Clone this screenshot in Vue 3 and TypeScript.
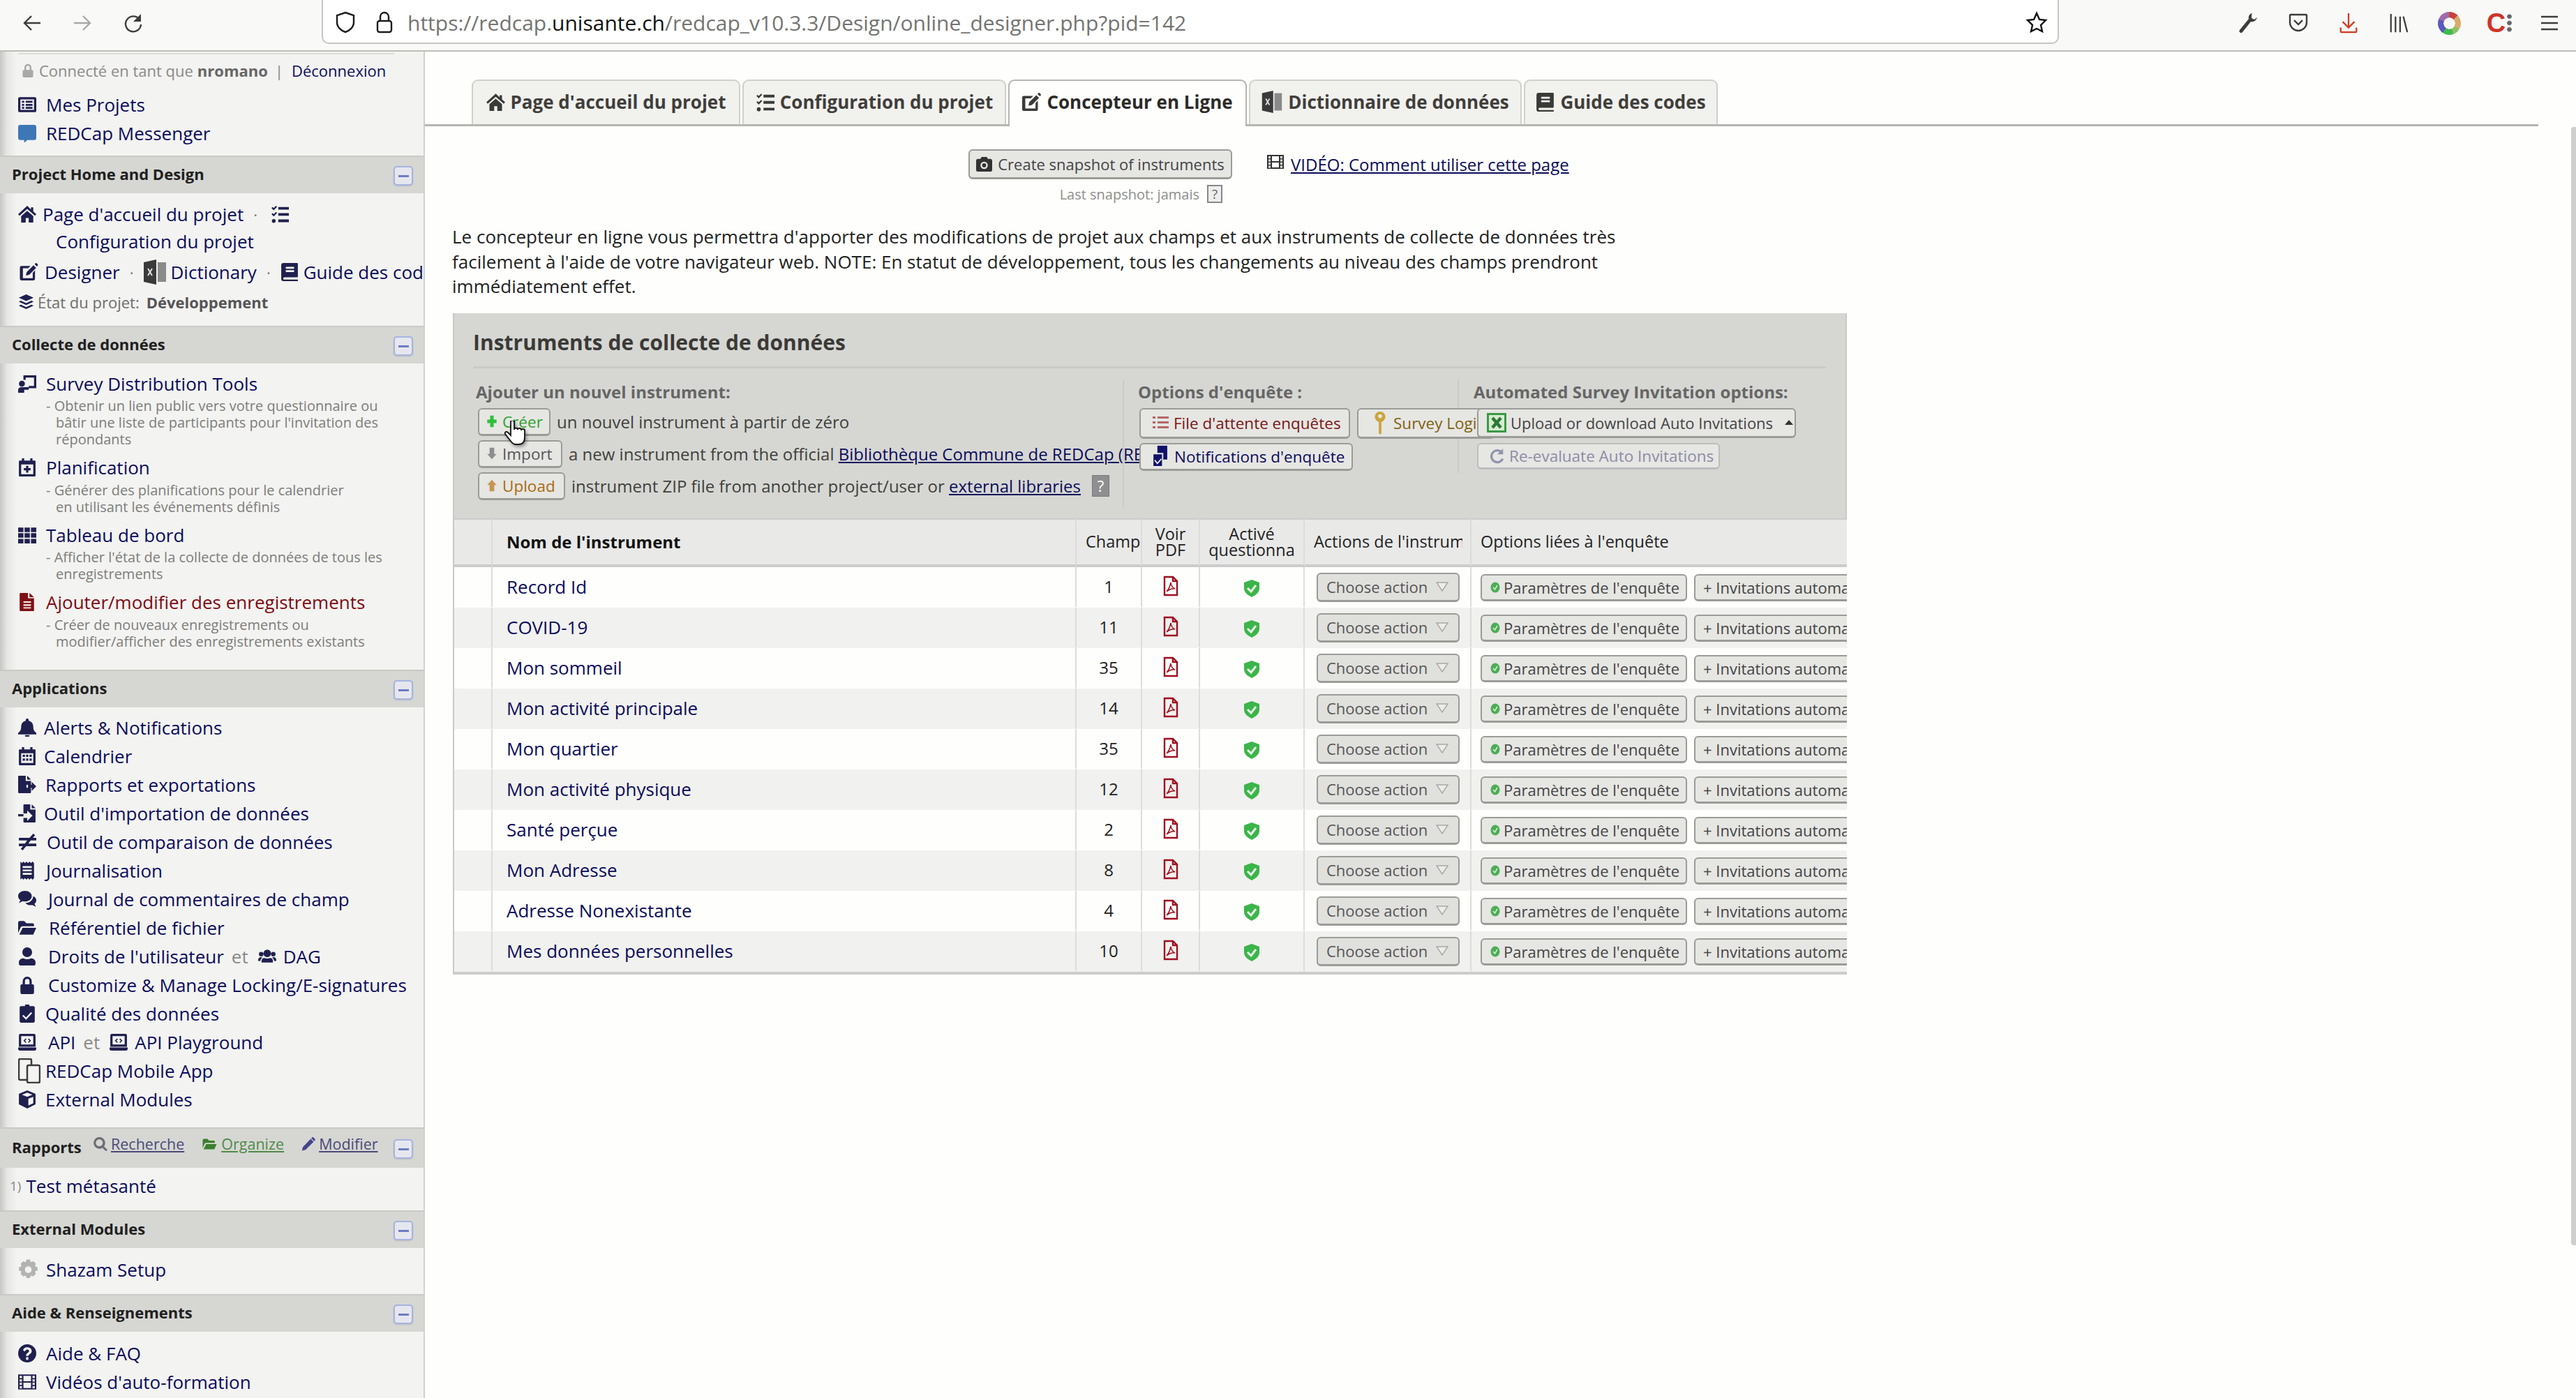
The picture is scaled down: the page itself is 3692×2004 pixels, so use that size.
<template>
  <div class="page">
    <header class="toolbar">
      <button class="tb"><svg viewBox="0 0 28 28"><path d="M26 14H3M13 4L3 14l10 10" /></svg></button>
      <button class="tb dim"><svg viewBox="0 0 28 28"><path d="M2 14h23M15 4l10 10-10 10" /></svg></button>
      <button class="tb"><svg viewBox="0 0 28 28"><path d="M24 9a11 11 0 1 0 2 7" /><path class="solid" d="M26 1v11H15z" /></svg></button>
      <div class="urlbar">
        <svg class="url-ic" viewBox="0 0 30 32"><path d="M15 2l12 4v10c0 7-6 12-12 14C9 28 3 23 3 16V6z" /></svg>
        <svg class="url-ic lock-ic" viewBox="0 0 26 32"><path d="M7 14V8a6 6 0 0 1 12 0v6" /><rect x="3" y="14" width="20" height="16" rx="3" /></svg>
        <span class="url-text">https://redcap.<b>unisante.ch</b>/redcap_v10.3.3/Design/online_designer.php?pid=142</span>
        <svg class="url-star" viewBox="0 0 32 32"><path d="M16 3l4 9 9 1-7 7 2 9-8-4-8 4 2-9-7-7 9-1z" /></svg>
      </div>
      <div class="tb-right">
        <button class="tb"><svg viewBox="0 0 28 30"><path class="solid" d="M20 1c-4 1-6 4-5 8L2 25a2.5 2.5 0 0 0 4 3L18 13c4 1 8-2 9-6l-4 3-4-2 0-4z" /></svg></button>
        <button class="tb"><svg viewBox="0 0 28 28"><path d="M3 2h22a1 1 0 0 1 1 1v10c0 7-6 12-12 12S2 20 2 13V3a1 1 0 0 1 1-1zM8 10l6 6 6-6" /></svg></button>
        <button class="tb red"><svg viewBox="0 0 28 32"><path d="M14 1v22M5 14l9 9 9-9M2 23v6a1 1 0 0 0 1 1h22a1 1 0 0 0 1-1v-6" /></svg></button>
        <button class="tb"><svg viewBox="0 0 28 32"><path d="M2 2v28M9 6v24M16 6v24M21 6l6 24" /></svg></button>
        <button class="tb"><span class="wheel"></span></button>
        <button class="tb"><span class="c-logo">C<i class="c-dots"></i></span></button>
        <button class="tb"><svg viewBox="0 0 28 28"><path d="M2 5h24M2 14h24M2 23h24" /></svg></button>
      </div>
    </header>

    <div class="body">
      <aside class="side">
        <div class="side-top">
          <div class="login"><Ic n="lock" class="login-ic" />Connecté en tant que <b>nromano</b><span class="pipe">|</span><a>Déconnexion</a></div>
          <a class="nav"><span class="gut"><Ic n="listAlt" /></span>Mes Projets</a>
          <a class="nav"><span class="gut"><Ic n="comment" class="blue" /></span>REDCap Messenger</a>
        </div>

        <div class="head"><span class="head-title">Project Home and Design</span><i class="collapse"></i></div>
        <div class="sec sec-home">
          <div class="nav tight"><Ic n="home" /><a class="ml9">Page d'accueil du projet</a><span class="dot">·</span><Ic n="tasks" /></div>
          <div class="nav tight indent">Configuration du projet</div>
          <div class="nav design">
            <Ic n="edit" class="w31" /><a class="ml8">Designer</a><span class="dot">·</span>
            <svg class="xl" viewBox="0 0 32 36"><path d="M0 4l18-4v36L0 32z" /><path d="M20 4h12v28H20z" fill="#8a8a8a" /><path d="M6 13l6 10M12 13L6 23" stroke="#ddd" stroke-width="2" /></svg>
            <a class="ml8">Dictionary</a><span class="dot">·</span><Ic n="book" /><a class="ml7">Guide des codes</a>
          </div>
          <div class="state"><Ic n="layers" class="state-ic" />État du projet: <b>Développement</b></div>
        </div>

        <div class="head"><span class="head-title">Collecte de données</span><i class="collapse"></i></div>
        <div class="sec sec-collect">
          <div v-for="c in collecte" :key="c.label" class="collect-item">
            <a class="nav" :class="{ dark: c.red }"><span class="gut"><Ic :n="c.icon" :class="{ darkred: c.red }" /></span>{{ c.label }}</a>
            <div class="desc"><div v-for="l in c.lines" :key="l">{{ l }}</div></div>
          </div>
        </div>

        <div class="head"><span class="head-title">Applications</span><i class="collapse"></i></div>
        <div class="sec sec-apps">
          <div v-for="a in apps" :key="a.label" class="nav">
            <span class="gut" :style="{ width: a.x + 'px' }">
              <svg v-if="a.icon === 'mobile'" class="mobile" viewBox="0 0 32 36"><rect x="1" y="1" width="18" height="30" rx="2" /><rect x="13" y="10" width="18" height="25" rx="2" fill="#f3f3f1" /></svg>
              <Ic v-else :n="a.icon" />
            </span>
            <a>{{ a.label }}</a>
            <template v-if="a.and"><span class="et">et</span><Ic :n="a.andIcon || ''" class="wide" /><a class="ml7">{{ a.and }}</a></template>
          </div>
        </div>

        <div class="head head-rep">
          <span class="head-title">Rapports</span>
          <span class="rep-links">
            <Ic n="search" class="rep-ic gray" /><a class="rep">Recherche</a>
            <Ic n="folder" class="rep-ic green" /><a class="rep green-t">Organize</a>
            <Ic n="pencil" class="rep-ic navy-l" /><a class="rep">Modifier</a>
          </span>
          <i class="collapse"></i>
        </div>
        <div class="sec sec-rep"><div class="nav rep-row"><span class="num">1)</span><a>Test métasanté</a></div></div>

        <div class="head"><span class="head-title">External Modules</span><i class="collapse"></i></div>
        <div class="sec sec-ext">
          <a class="nav"><span class="gut"><Ic n="gear" class="light" /></span>Shazam Setup</a>
        </div>

        <div class="head"><span class="head-title">Aide &amp; Renseignements</span><i class="collapse"></i></div>
        <div class="sec sec-ext">
          <a class="nav"><span class="gut"><Ic n="help" /></span>Aide &amp; FAQ</a>
          <a class="nav"><span class="gut"><Ic n="film" /></span>Vidéos d'auto-formation</a>
        </div>
      </aside>

      <main class="main">
        <nav class="tabs">
          <a v-for="t in tabs" :key="t.label" class="tab" :class="{ on: t.on }" :style="{ width: t.w + 'px' }">
            <svg v-if="t.icon === 'xl'" class="xl tab-xl" viewBox="0 0 32 36"><path d="M0 4l18-4v36L0 32z" /><path d="M20 4h12v28H20z" fill="#8a8a8a" /><path d="M6 13l6 10M12 13L6 23" stroke="#ddd" stroke-width="2" /></svg>
            <Ic v-else :n="t.icon" />{{ t.label }}
          </a>
        </nav>

        <div class="snap-row">
          <div class="snap">
            <button class="btn snap-btn"><Ic n="camera" />Create snapshot of instruments</button>
            <div class="snap-last">Last snapshot: jamais<span class="q-box">?</span></div>
          </div>
          <a class="video"><Ic n="film" />VIDÉO: Comment utiliser cette page</a>
        </div>

        <p class="intro">Le concepteur en ligne vous permettra d'apporter des modifications de projet aux champs et aux instruments de collecte de données très facilement à l'aide de votre navigateur web. NOTE: En statut de développement, tous les changements au niveau des champs prendront immédiatement effet.</p>

        <section class="panel">
          <div class="panel-title">Instruments de collecte de données</div>
          <div class="cols">
            <div class="col col1">
              <div class="col-label">Ajouter un nouvel instrument:</div>
              <div class="add-row">
                <button class="btn add-btn create"><svg viewBox="0 0 16 24"><path d="M5 2h6v7h5v6h-5v7H5v-7H0V9h5z" /></svg>Créer</button>
                <span>un nouvel instrument à partir de zéro</span>
              </div>
              <div class="add-row">
                <button class="btn add-btn import"><svg viewBox="0 0 16 24"><path d="M4 2h8v11h4l-8 9-8-9h4z" /></svg>Import</button>
                <span>a new instrument from the official <a class="lnk">Bibliothèque Commune de REDCap (REDCap Shared Library)</a></span>
              </div>
              <div class="add-row">
                <button class="btn add-btn upload"><svg viewBox="0 0 16 24"><path d="M8 2l8 9h-4v11H4V11H0z" /></svg>Upload</button>
                <span>instrument ZIP file from another project/user or <a class="lnk">external libraries</a></span>
                <span class="help">?</span>
              </div>
            </div>
            <div class="col col2">
              <div class="col-label">Options d'enquête :</div>
              <div class="opt-row">
                <button class="btn opt queue"><Ic n="tasksList" />File d'attente enquêtes</button>
                <button class="btn opt login-b">
                  <svg viewBox="0 0 22 36"><circle cx="11" cy="9" r="8" /><path d="M9 15h4v19l-2 2-2-2z" /><circle cx="11" cy="8" r="3" fill="#e6e6e3" /></svg>
                  Survey Login
                </button>
              </div>
              <button class="btn opt notif">
                <svg viewBox="0 0 26 34"><path d="M8 1h15v21H8z" /><path d="M1 13h15v20H1z" stroke="#e6e6e3" stroke-width="2" /><path d="M4 23l4 5 6-7" stroke="#e6e6e3" stroke-width="2" fill="none" /></svg>
                Notifications d'enquête
              </button>
            </div>
            <div class="col col3">
              <div class="col-label">Automated Survey Invitation options:</div>
              <button class="btn auto">
                <svg viewBox="0 0 28 28"><rect width="28" height="28" fill="#3a9a46" /><rect x="3" y="3" width="22" height="22" fill="#d6edcf" /><path d="M8 7l12 14M20 7L8 21" stroke="#2c7a38" stroke-width="4.5" /></svg>
                Upload or download Auto Invitations<i class="caret"></i>
              </button>
              <button class="btn reeval"><Ic n="redo" />Re-evaluate Auto Invitations</button>
            </div>
          </div>

          <table class="grid">
            <colgroup>
              <col v-for="w in colWidths" :key="w" :style="{ width: w + 'px' }" />
            </colgroup>
            <thead>
              <tr>
                <th></th>
                <th class="th-name">Nom de l'instrument</th>
                <th class="clip">Champ</th>
                <th class="c">Voir<br />PDF</th>
                <th class="c">Activé<br />questionna</th>
                <th class="clip"><span class="th-cut">Actions de l'instrument</span></th>
                <th class="clip">Options liées à l'enquête</th>
              </tr>
            </thead>
            <tbody>
              <tr v-for="r in rows" :key="r.name">
                <td></td>
                <td class="td-name"><a>{{ r.name }}</a></td>
                <td class="c">{{ r.n }}</td>
                <td class="c">
                  <svg class="pdf" viewBox="0 0 24 30"><path d="M3 2h12l6 6v20H3zM15 2v6h6" /><path class="thin" d="M12 10c-1 5-3 10-6 13 3-3 9-5 12-4-3-1-6-5-6-9z" /></svg>
                </td>
                <td class="c">
                  <svg class="shield" viewBox="0 0 24 26"><path d="M12 1l11 4v8c0 6-5 10-11 13C6 23 1 19 1 13V5z" /><path class="chk" d="M6 13l5 5 7-9" /></svg>
                </td>
                <td class="td-act">
                  <button class="btn choose">Choose action<svg class="tri" viewBox="0 0 18 14"><path d="M1 1h16L9 13z" /></svg></button>
                </td>
                <td class="td-opt">
                  <button class="btn param"><svg class="ok" viewBox="0 0 14 16"><ellipse cx="7" cy="8" rx="6.5" ry="7.5" /><path d="M4 8l2.5 3L10 5" /></svg>Paramètres de l'enquête</button>
                  <button class="btn invite">+ Invitations automatiques</button>
                </td>
              </tr>
            </tbody>
          </table>
        </section>

        <svg class="cursor" viewBox="0 0 34 36"><path d="M10 2a2.5 2.5 0 0 1 5 0v11a2.5 2.5 0 0 1 5 0 2.5 2.5 0 0 1 5 1 2.5 2.5 0 0 1 5 1v9c0 6-3 10-9 10h-4c-4 0-6-3-8-6l-7-9c-1-3 2-4 4-2l4 4z" /></svg>
      </main>
      <div class="scroll-thumb"></div>
    </div>
  </div>
</template>

<script setup lang="ts">
import { h } from "vue"
import type { FunctionalComponent } from "vue"

const icons: Record<string, string> = {
  lock: "M6 11V7a6 6 0 0 1 12 0v4h1a2 2 0 0 1 2 2v9a2 2 0 0 1-2 2H5a2 2 0 0 1-2-2v-9a2 2 0 0 1 2-2zM9 11h6V7a3 3 0 0 0-6 0z",
  listAlt: "M2 2h20a2 2 0 0 1 2 2v16a2 2 0 0 1-2 2H2a2 2 0 0 1-2-2V4a2 2 0 0 1 2-2zM3 5v14h18V5zM5 7h3v2.5H5zM10 7h9v2.5h-9zM5 11h3v2.5H5zM10 11h9v2.5h-9zM5 15h3v2.5H5zM10 15h9v2.5h-9z",
  comment: "M3 1h18a3 3 0 0 1 3 3v14a3 3 0 0 1-3 3H12l-4 4v-4H3a3 3 0 0 1-3-3V4a3 3 0 0 1 3-3z",
  home: "M12 1L0 12l1.8 2L12 5l10.2 9 1.8-2-4-3.6V3h-3v2.7zM12 7.5L4 14.5V23h6v-6h4v6h6v-8.5z",
  tasks: "M1 4l1.4-1.4L4 4l3-3 1.4 1.4L4 7zM10 2.5h14V6H10zM1 12l1.4-1.4L4 12l3-3 1.4 1.4L4 15zM10 10.5h14V14H10zM1.5 21a2.5 2.5 0 1 1 5 0 2.5 2.5 0 0 1-5 0zM10 19h14v3.5H10z",
  tasksList: "M1 3h4v3H1zM8 3h16v3H8zM1 10h4v3H1zM8 10h16v3H8zM1 17h4v3H1zM8 17h16v3H8z",
  edit: "M2 4h12l-3 3H4v13h13v-7l3-3v11a2 2 0 0 1-2 2H2a2 2 0 0 1-2-2V6a2 2 0 0 1 2-2zM9 12l9-9 3.5 3.5-9 9-4.5 1zM19.5 1.5l1-1a1.5 1.5 0 0 1 2 0l1 1a1.5 1.5 0 0 1 0 2l-1 1z",
  book: "M4 0h18a1 1 0 0 1 1 1v17a1 1 0 0 1-1 1H5a1.5 1.5 0 0 0 0 3h18v2H4a3 3 0 0 1-3-3V3a3 3 0 0 1 3-3zM7 5v2.5h11V5zM7 9.5V12h11V9.5z",
  layers: "M12 1l11 5-11 5L1 6zM4 10.5l8 3.7 8-3.7 3 1.5-11 5L1 12zM4 16.5l8 3.7 8-3.7 3 1.5-11 5L1 18z",
  chalk: "M7 1h17v17H14v-3h7V4H10v3H7zM5 8a4 4 0 1 1 0 8 4 4 0 0 1 0-8zM0 20c0-2 2-3.5 5-3.5h9V20h-6v4H0z",
  calPlus: "M5 0h3v3h8V0h3v3h3a1 1 0 0 1 1 1v19a1 1 0 0 1-1 1H2a1 1 0 0 1-1-1V4a1 1 0 0 1 1-1h3zM4 8v13h16V8zM10.5 10h3v3h3v3h-3v3h-3v-3h-3v-3h3z",
  th: "M0 2h7v6H0zM8.5 2h7v6h-7zM17 2h7v6h-7zM0 9.5h7v6H0zM8.5 9.5h7v6h-7zM17 9.5h7v6h-7zM0 17h7v6H0zM8.5 17h7v6h-7zM17 17h7v6h-7z",
  fileAlt: "M3 0h10v7h8v16a1 1 0 0 1-1 1H3a1 1 0 0 1-1-1V1a1 1 0 0 1 1-1zM15 0l6 5.5h-6zM7 11v2h10v-2zM7 15v2h10v-2zM7 19v1.5h10V19z",
  bell: "M12 0a2 2 0 0 1 2 2v1c4 1 6 4 6 8 0 5 2 6 4 8v2H0v-2c2-2 4-3 4-8 0-4 2-7 6-8V2a2 2 0 0 1 2-2zM9 22h6a3 3 0 0 1-6 0z",
  calAlt: "M5 0h3v3h8V0h3v3h3a1 1 0 0 1 1 1v19a1 1 0 0 1-1 1H2a1 1 0 0 1-1-1V4a1 1 0 0 1 1-1h3zM4 8v13h16V8zM6 10h3v3H6zM10.5 10h3v3h-3zM15 10h3v3h-3zM6 15h3v3H6zM10.5 15h3v3h-3zM15 15h3v3h-3z",
  fileExport: "M1 0h9v7h7v5h-6v4h6v6a1 1 0 0 1-1 1H1a1 1 0 0 1-1-1V1a1 1 0 0 1 1-1zM12 0l5 5h-5zM13 12h5V8l6 6-6 6v-4h-5z",
  fileImport: "M8 0h8v7h7v16a1 1 0 0 1-1 1H8a1 1 0 0 1-1-1v-5h5v4l7-7-7-7v4H7V1a1 1 0 0 1 1-1zM18 0l5 5h-5zM0 13h7v3H0z",
  notEqual: "M20 1l2.5 2-3 3.5H24V10h-7.5l-3 4H24v3.5H10.5L6 23l-2.5-2 3-3.5H1V14h8l3-4H1V6.5h14z",
  receipt: "M3 0l2 2 2-2 2 2 2-2 2 2 2-2 2 2 2-2 2 2v20l-2 2-2-2-2 2-2-2-2 2-2-2-2 2-2-2-2 2zM6 6v2.5h12V6zM6 10.5V13h12v-2.5zM6 15v2.5h12V15z",
  comments: "M9 1c5 0 9 3 9 7s-4 7-9 7c-1 0-2 0-3-.4L1 17l2-4c-2-1-3-3-3-5 0-4 4-7 9-7zM20 8c2.5 1 4 3 4 5.5 0 2-1 3.5-2.5 4.5l2 4-5-2.5c-3 1-7 0-9-2.5 5.5 0 10-3.5 10.5-9z",
  folder: "M2 3h6l3 3h8a2 2 0 0 1 2 2v2H6c-1.5 0-2.5 1-3 2L0 19V5a2 2 0 0 1 2-2zM6 12h18l-4 9H1.5z",
  user: "M12 0a6.5 6.5 0 1 1 0 13 6.5 6.5 0 0 1 0-13zM7 14.5c3 1.5 7 1.5 10 0 3 0 6 2 6 5V22a2 2 0 0 1-2 2H3a2 2 0 0 1-2-2v-2.5c0-3 3-5 6-5z",
  users: "M12 3a5 5 0 1 1 0 10 5 5 0 0 1 0-10zM4 6a3 3 0 1 1 0 6 3 3 0 0 1 0-6zM20 6a3 3 0 1 1 0 6 3 3 0 0 1 0-6zM8 14c2.5 1 5.5 1 8 0 2 0 3.5 1.5 3.5 4v2H4.5v-2c0-2.5 1.5-4 3.5-4zM0 17c0-2.5 1.5-4 4-4l1.5.5C4 14.5 3 16 3 18H0zM24 17c0-2.5-1.5-4-4-4l-1.5.5c1.5 1 2.5 2.5 2.5 4.5h3z",
  clipboard: "M9 2a3 3 0 0 1 6 0h5a2 2 0 0 1 2 2v18a2 2 0 0 1-2 2H4a2 2 0 0 1-2-2V4a2 2 0 0 1 2-2zM17 10l-6.5 7L7 13.5 5.5 15l5 5 8-8.5z",
  laptop: "M3 1h18a2 2 0 0 1 2 2v15H1V3a2 2 0 0 1 2-2zM4 4v11h16V4zM10 7l-3 3 3 3 1-1-2-2 2-2zM14 7l3 3-3 3-1-1 2-2-2-2zM0 19h24v2a2 2 0 0 1-2 2H2a2 2 0 0 1-2-2z",
  cube: "M12 0l11 4.5v14L12 24 1 18.5v-14zM12 3L5 5.8l7 2.8 7-2.8zM13.5 11v9l6.5-3V8.5z",
  search: "M10 0a10 10 0 0 1 8 16l6 6-2.5 2.5-6-6A10 10 0 1 1 10 0zM10 4a6 6 0 1 0 0 12 6 6 0 0 0 0-12z",
  pencil: "M16 3l5 5L7 22l-6 1.5L2.5 17zM18 1a2 2 0 0 1 3 0l2 2a2 2 0 0 1 0 3l-1 1-5-5z",
  gear: "M10 0h4l1 3 3-1 3 3-1 3 3 1v4l-3 1 1 3-3 3-3-1-1 3h-4l-1-3-3 1-3-3 1-3-3-1v-4l3-1-1-3 3-3 3 1zM12 8a4 4 0 1 0 0 8 4 4 0 0 0 0-8z",
  help: "M12 0a12 12 0 1 1 0 24 12 12 0 0 1 0-24zM12 4c-3 0-5 2-5.5 4l2.5 1.5c.5-1 1.5-2.5 3-2.5 1.3 0 2.5 1 2.5 2 0 2-4 2.5-4 6v.5h3c0-2 4.5-3 4.5-6.5C18 6 15 4 12 4zM10.5 17v3.5h3V17z",
  film: "M0 2h24v20H0zM2 4v3h3V4zM2 8.5v3h3v-3zM2 13v3h3v-3zM2 17.5v3h3v-3zM19 4v3h3V4zM19 8.5v3h3v-3zM19 13v3h3v-3zM19 17.5v3h3v-3zM7 4v7h10V4zM7 13v7h10v-7z",
  camera: "M8 1h8l1.5 3H21a3 3 0 0 1 3 3v13a3 3 0 0 1-3 3H3a3 3 0 0 1-3-3V7a3 3 0 0 1 3-3h3.5zM12 8a5.5 5.5 0 1 0 0 11 5.5 5.5 0 0 0 0-11zM12 10.5a3 3 0 1 1 0 6 3 3 0 0 1 0-6z",
  redo: "M21 1v9h-9l3.5-3.5A7.5 7.5 0 1 0 19 16l3 2A11 11 0 1 1 18 4z",
}

const Ic: FunctionalComponent<{ n: string }> = (p) =>
  h("svg", { viewBox: "0 0 24 24", class: "ic" }, [h("path", { d: icons[p.n], "fill-rule": "evenodd" })])
Ic.props = ["n"]

const collecte = [
  {
    label: "Survey Distribution Tools",
    icon: "chalk",
    lines: ["- Obtenir un lien public vers votre questionnaire ou", "bâtir une liste de participants pour l'invitation des", "répondants"],
  },
  { label: "Planification", icon: "calPlus", lines: ["- Générer des planifications pour le calendrier", "en utilisant les événements définis"] },
  { label: "Tableau de bord", icon: "th", lines: ["- Afficher l'état de la collecte de données de tous les", "enregistrements"] },
  {
    label: "Ajouter/modifier des enregistrements",
    icon: "fileAlt",
    red: true,
    lines: ["- Créer de nouveaux enregistrements ou", "modifier/afficher des enregistrements existants"],
  },
]

const apps: { label: string; icon: string; x: number; and?: string; andIcon?: string }[] = [
  { label: "Alerts & Notifications", icon: "bell", x: 37 },
  { label: "Calendrier", icon: "calAlt", x: 37 },
  { label: "Rapports et exportations", icon: "fileExport", x: 39 },
  { label: "Outil d'importation de données", icon: "fileImport", x: 37 },
  { label: "Outil de comparaison de données", icon: "notEqual", x: 41 },
  { label: "Journalisation", icon: "receipt", x: 40 },
  { label: "Journal de commentaires de champ", icon: "comments", x: 43 },
  { label: "Référentiel de fichier", icon: "folder", x: 44 },
  { label: "Droits de l'utilisateur", icon: "user", x: 43, and: "DAG", andIcon: "users" },
  { label: "Customize & Manage Locking/E-signatures", icon: "lock", x: 43 },
  { label: "Qualité des données", icon: "clipboard", x: 39 },
  { label: "API", icon: "laptop", x: 43, and: "API Playground", andIcon: "laptop" },
  { label: "REDCap Mobile App", icon: "mobile", x: 39 },
  { label: "External Modules", icon: "cube", x: 39 },
]

const tabs = [
  { label: "Page d'accueil du projet", icon: "home", w: 385 },
  { label: "Configuration du projet", icon: "tasks", w: 378 },
  { label: "Concepteur en Ligne", icon: "edit", w: 342, on: true },
  { label: "Dictionnaire de données", icon: "xl", w: 391 },
  { label: "Guide des codes", icon: "book", w: 278 },
]

const colWidths = [55, 837, 94, 83, 150, 239, 538]

const rows = [
  { name: "Record Id", n: 1 },
  { name: "COVID-19", n: 11 },
  { name: "Mon sommeil", n: 35 },
  { name: "Mon activité principale", n: 14 },
  { name: "Mon quartier", n: 35 },
  { name: "Mon activité physique", n: 12 },
  { name: "Santé perçue", n: 2 },
  { name: "Mon Adresse", n: 8 },
  { name: "Adresse Nonexistante", n: 4 },
  { name: "Mes données personnelles", n: 10 },
]
</script>

<style>
html, body { margin: 0; background: #fefefc; }
</style>

<style scoped>
.page {
  width: 3692px;
  height: 2004px;
  overflow: hidden;
  background: #fefefc;
  font-family: "Open Sans", "Liberation Sans", sans-serif;
  font-size: 26px;
  color: #1d1d1b;
}
svg { display: block; flex: none; }
.ic { width: 26px; height: 26px; fill: #20204f; flex: none; }
a { color: #0c0c5c; text-decoration: none; }
button { font-family: inherit; }

/* browser chrome */
.toolbar {
  height: 74px;
  box-sizing: border-box;
  background: #f9f9f7;
  border-bottom: 2px solid #bdbdb8;
  display: flex;
  align-items: center;
  padding-left: 10px;
}
.tb {
  width: 72px;
  height: 64px;
  margin-top: -6px;
  border: none;
  background: none;
  padding: 0;
  display: flex;
  align-items: center;
  justify-content: center;
  flex: none;
}
.tb svg { width: 28px; height: 30px; fill: none; stroke: #3d3d3b; stroke-width: 2.4; }
.tb .solid { fill: #3d3d3b; stroke: none; }
.tb.dim svg { stroke: #a8a8a6; }
.tb.red svg { stroke: #d23a22; }
.wheel {
  width: 33px;
  height: 33px;
  border-radius: 50%;
  background:
    radial-gradient(circle, #f9f9f7 34%, transparent 36%),
    conic-gradient(#c8413f 0 45deg, #d9ab6e 45deg 120deg, #8cc06a 120deg 160deg, #3fbb4b 160deg 215deg, #5b5bbd 215deg 290deg, #a06bac 290deg 360deg);
}
.c-logo {
  font-family: "Liberation Sans", sans-serif;
  font-weight: 700;
  font-size: 38px;
  line-height: 34px;
  color: #cf3327;
  display: flex;
  align-items: center;
  gap: 2px;
}
.c-dots {
  width: 7px;
  height: 28px;
  background: radial-gradient(circle, #666 3px, transparent 3.5px) 0 0 / 7px 9.3px;
}
.urlbar {
  margin-left: 235px;
  margin-top: -9px;
  width: 2490px;
  height: 63px;
  box-sizing: border-box;
  flex: none;
  background: #fff;
  border: 2px solid #c6c6c2;
  border-top: none;
  border-radius: 0 0 10px 10px;
  display: flex;
  align-items: center;
  padding: 3px 14px 0 17px;
}
.url-ic { width: 30px; height: 32px; fill: none; stroke: #1c1c1c; stroke-width: 2.4; }
.lock-ic { width: 26px; margin-left: 28px; }
.url-text { margin-left: 20px; font-size: 30px; color: #747471; white-space: nowrap; flex: 1; }
.url-text b { font-weight: 400; color: #111; }
.url-star { width: 32px; height: 32px; fill: none; stroke: #111; stroke-width: 2.4; }
.tb-right { margin-left: 235px; display: flex; flex: none; }

.body { display: flex; height: 1930px; position: relative; }

/* sidebar */
.side {
  width: 607px;
  flex: none;
  height: 1930px;
  overflow: hidden;
  border-right: 2px solid #cfcfcb;
  background: linear-gradient(90deg, #c6c6c3 0, #e6e6e4 10px, #f3f3f1 24px);
}
.side-top { height: 147px; }
.side-top::before {
  content: "";
  display: block;
  height: 2px;
  margin: 2px 42px 0 26px;
  background: #dcdcd9;
}
.login {
  height: 40px;
  margin-top: 3px;
  padding-left: 30px;
  display: flex;
  align-items: center;
  font-size: 22px;
  color: #8a8a87;
  white-space: nowrap;
}
.login b { margin-left: 6px; color: #666; font-weight: 700; }
.login-ic { width: 20px; height: 22px; fill: #a9a9a6; margin-right: 6px; }
.pipe { margin: 0 12px 0 10px; color: #888; }
.login a { color: #0c0c5c; }
.nav {
  height: 41px;
  box-sizing: border-box;
  display: flex;
  align-items: center;
  padding-left: 26px;
  padding-bottom: 4px;
  white-space: nowrap;
  color: #0c0c5c;
}
.login + .nav { margin-top: 10px; }
.gut { width: 40px; flex: none; display: block; }
.blue { fill: #3e77b6; }
.head {
  height: 54px;
  box-sizing: border-box;
  border-top: 2px solid #c9c9c5;
  background: #d6d7d3;
  display: flex;
  align-items: center;
  padding: 0 15px 5px 17px;
  font-size: 22px;
  font-weight: 700;
  color: #20201e;
}
.head-title { flex: 1; white-space: nowrap; }
.collapse {
  width: 28px;
  height: 28px;
  margin-top: 7px;
  box-sizing: border-box;
  flex: none;
  border: 2px solid #a6b4e2;
  border-radius: 5px;
  background: #e6e7ee;
  display: flex;
  align-items: center;
  justify-content: center;
  box-shadow: 0 1px 2px #bbb;
}
.collapse::after { content: ""; width: 15px; height: 3px; background: #6c7cc4; }
.sec { padding-top: 12px; }
.sec-home { height: 178px; }
.tight { height: 39px; }
.ml9 { margin-left: 9px; }
.ml8 { margin-left: 7px; }
.ml7 { margin-left: 7px; }
.dot { margin: 0 14px; color: #777; font-size: 22px; }
.tight .ic:last-child { width: 28px; margin-left: 4px; }
.indent { padding-left: 80px; }
.design { margin-top: 4px; }
.w31 { width: 31px; }
.xl { width: 32px; height: 36px; fill: #3a3a3a; }
.state {
  height: 40px;
  box-sizing: border-box;
  margin-top: 3px;
  padding-left: 26px;
  padding-bottom: 5px;
  display: flex;
  align-items: center;
  font-size: 22px;
  color: #6e6e6b;
  white-space: nowrap;
}
.state b { margin-left: 10px; color: #555; }
.state-ic { width: 23px; height: 23px; margin-right: 5px; }
.sec-collect { height: 439px; box-sizing: border-box; padding-top: 10px; }
.collect-item { margin-bottom: 9.5px; }
.dark { color: #7e0a12; }
.darkred { fill: #800f14; }
.desc { padding-left: 66px; margin-top: -2px; font-size: 20px; line-height: 24px; color: #7d7d7a; white-space: nowrap; }
.desc div + div { padding-left: 14px; }
.sec-apps { height: 602px; box-sizing: border-box; padding-top: 10px; }
.et { margin: 0 11px; color: #8a8a87; }
.wide { width: 32px; }
.mobile { width: 32px; height: 36px; fill: none; stroke: #3c3c3c; stroke-width: 2.5; }
.head-rep { height: 58px; }
.head-rep .head-title { flex: 0 0 auto; width: 117px; }
.rep-links { flex: 1; display: flex; align-items: center; margin-top: -8px; font-weight: 400; }
.rep { font-size: 21.5px; color: #4a4a78; text-decoration: underline; margin: 0 25px 0 5px; }
.rep:last-child { margin-right: 0; }
.rep-ic { width: 20px; height: 20px; }
.gray { fill: #6d6d75; }
.green { fill: #3c7f2e; width: 23px; }
.green-t { color: #4f8a48; }
.navy-l { fill: #45458c; }
.sec-rep { height: 54px; padding-top: 7px; }
.rep-row { padding-left: 14px; }
.num { font-size: 19px; color: #888; margin-right: 7px; }
.sec-ext { height: 54px; }
.light { fill: #b3b3b1; width: 29px; height: 30px; }

/* main */
.main { flex: 1; min-width: 0; position: relative; }
.tabs {
  margin-top: 40px;
  height: 64px;
  width: 2962px;
  padding-left: 67px;
  border-bottom: 3px solid #b5b5b1;
  display: flex;
  gap: 3px;
}
.tab {
  height: 64px;
  box-sizing: border-box;
  border: 2px solid #d0d0cc;
  border-bottom: none;
  border-radius: 9px 9px 0 0;
  background: #f1f1ee;
  display: flex;
  align-items: center;
  justify-content: center;
  gap: 8px;
  padding-bottom: 2px;
  font-size: 26px;
  font-weight: 700;
  color: #403e3b;
  white-space: nowrap;
}
.tab .ic { fill: #3a3a38; width: 27px; height: 27px; }
.tab-xl { width: 30px; height: 32px; }
.tab.on {
  background: #fefefc;
  color: #2b2a27;
  height: 67px;
  padding-bottom: 5px;
  border-color: #b5b5b1;
}
.snap-row { display: flex; padding-left: 779px; margin-top: 33px; }
.snap { width: 378px; display: flex; flex-direction: column; }
.btn {
  box-sizing: border-box;
  background: #e6e6e3;
  border: 2px solid #9b9b97;
  border-bottom-width: 3px;
  border-radius: 6px;
  color: #444;
  font-size: 22px;
  display: flex;
  align-items: center;
  white-space: nowrap;
  padding: 0;
  position: relative;
  flex: none;
}
.snap-btn { height: 43px; justify-content: center; gap: 8px; }
.snap-btn .ic { width: 23px; height: 23px; fill: #333; }
.snap-last {
  margin-top: 6px;
  height: 30px;
  display: flex;
  align-items: center;
  justify-content: flex-end;
  padding-right: 14px;
  font-size: 20px;
  color: #8e8e8b;
  white-space: nowrap;
}
.q-box {
  width: 22px;
  height: 26px;
  margin-left: 11px;
  box-sizing: border-box;
  border: 2px solid #888;
  background: #eee;
  color: #666;
  font-size: 19px;
  line-height: 22px;
  text-align: center;
}
.video {
  margin-left: 49px;
  height: 43px;
  display: flex;
  align-items: center;
  gap: 9px;
  font-size: 24px;
  text-decoration: underline;
  white-space: nowrap;
  color: #0c0c5c;
}
.video .ic { width: 26px; height: 24px; fill: #333; margin-top: -8px; }
.intro {
  margin: 29px 0 20px 39px;
  width: 1690px;
  line-height: 35.5px;
  color: #222;
}
.panel {
  margin-left: 40px;
  width: 1998px;
  box-sizing: border-box;
  background: #d6d7d3;
  border-left: 2px solid #c9c9c5;
  border-right: 2px solid #c9c9c5;
  border-bottom: 4px solid #ccc;
}
.panel-title {
  margin: 0 28px 0 27px;
  height: 79px;
  box-sizing: border-box;
  border-bottom: 3px solid #cacbc7;
  padding-top: 20px;
  font-size: 30px;
  line-height: 44px;
  font-weight: 700;
  color: #3b3a37;
}
.cols { display: flex; height: 215px; box-sizing: border-box; padding-top: 16px; padding-left: 27px; }
.col { flex: none; }
.col1 { width: 933px; height: 183px; border-right: 2px solid #cacbc7; box-sizing: border-box; padding-left: 4px; font-size: 24px; color: #3f3f3c; }
.col2 { width: 480px; height: 134px; border-right: 2px solid #cacbc7; box-sizing: border-box; padding-left: 20px; }
.col3 { padding-left: 21px; }
.col-label { height: 36px; line-height: 36px; font-size: 24px; font-weight: 700; color: #666; white-space: nowrap; margin-bottom: 5px; }
.add-row { height: 40px; margin-bottom: 6px; display: flex; align-items: center; gap: 9px; white-space: nowrap; }
.add-btn { height: 40px; padding: 0 10px 0 11px; gap: 8px; font-size: 22.5px; color: #555; }
.add-btn svg { width: 14px; height: 20px; }
.create { margin-left: 3px; width: 104px; color: #2da32d; }
.create svg { fill: #2fbf3a; }
.import { margin-left: 3px; width: 121px; }
.import svg { fill: #8d8d8d; }
.upload { margin-left: 3px; width: 125px; color: #a96a10; }
.upload svg { fill: #c69455; }
.lnk { text-decoration: underline; color: #0c0c5c; }
.help {
  width: 25px;
  height: 31px;
  background: #8f8f8f;
  color: #fff;
  font-size: 22px;
  line-height: 29px;
  text-align: center;
  margin-left: 7px;
  flex: none;
  border: 1px solid #7a7a7a;
  box-sizing: border-box;
}
.opt-row { display: flex; gap: 10px; height: 50px; margin-top: 2px; }
.opt { height: 44px; font-size: 22.5px; margin-left: 2px; }
.queue { width: 302px; padding-left: 16px; gap: 7px; color: #7a1616; }
.queue .ic { width: 24px; height: 24px; fill: #b46666; }
.login-b { width: 198px; margin-left: 0; padding-left: 20px; gap: 8px; color: #80620f; }
.login-b svg { width: 22px; height: 34px; fill: #c9a53d; }
.notif { width: 306px; height: 40px; padding-left: 16px; gap: 7px; color: #0c0c5c; }
.notif svg { width: 25px; height: 32px; fill: #11116a; }
.auto { width: 457px; height: 43px; margin: 3px 0 0 5px; padding-left: 12px; gap: 6px; color: #444; z-index: 1; font-size: 22px; }
.auto svg { width: 28px; height: 28px; }
.caret { margin-left: 11px; width: 0; height: 0; border-left: 6px solid transparent; border-right: 6px solid transparent; border-bottom: 7px solid #333; }
.reeval { width: 348px; height: 38px; margin: 7px 0 0 5px; padding-left: 16px; gap: 6px; border-color: #bdbdc0; color: #8c8ca6; font-size: 22.5px; }
.reeval .ic { width: 22px; height: 26px; fill: #8f93ad; }

.grid {
  width: 1994px;
  table-layout: fixed;
  border-collapse: separate;
  border-spacing: 0;
  background: #fefefc;
}
.grid th {
  height: 70px;
  box-sizing: border-box;
  background: #e9e9e8;
  border-top: 2px solid #ccc;
  border-bottom: 4px solid #ccc;
  border-right: 2px solid #dcdcd9;
  font-size: 23.5px;
  line-height: 23px;
  font-weight: 400;
  color: #222;
  text-align: left;
  padding: 0 0 0 18px;
  overflow: hidden;
  white-space: nowrap;
}
.grid th.th-name { font-size: 24px; font-weight: 700; color: #111; padding-left: 20px; }
.grid th.c { padding: 0; text-align: center; }
.grid th.clip { padding-left: 13px; }
.grid th:last-child { border-right: none; padding-left: 13px; }
.th-cut { display: block; width: 213px; overflow: hidden; }
.grid td {
  height: 58px;
  box-sizing: border-box;
  border-right: 2px solid #dcdcd9;
  border-bottom: 2px solid #fefefc;
  padding: 0;
  overflow: hidden;
  white-space: nowrap;
  color: #222;
  font-size: 24px;
}
.grid tr:nth-child(even) td { background: #f1f1ef; border-bottom-color: #f1f1ef; }
.grid td:last-child { border-right: none; }
.grid td.td-name { padding-left: 20px; font-size: 26px; }
.c { text-align: center; }
.pdf { width: 24px; height: 32px; margin: -2px auto 0; fill: none; stroke: #a00f1f; stroke-width: 2.4; }
.thin { stroke-width: 1.5; }
.shield { width: 24px; height: 26px; margin: 5px auto 0; fill: #3cb54a; }
.chk { fill: none; stroke: #e6f6e6; stroke-width: 3; }
.grid td.td-act { padding-left: 17px; }
.choose { width: 205px; height: 42px; margin-top: 2px; padding-left: 12px; background: #e0e0dd; color: #555; }
.tri { margin-left: 12px; width: 18px; height: 14px; fill: #ecece9; stroke: #a8a8a6; stroke-width: 1.5; }
.grid td.td-opt { padding-left: 13px; }
.td-opt .btn { display: inline-flex; vertical-align: middle; margin-top: 3px; }
.param { width: 296px; height: 39px; padding-left: 12px; gap: 5px; }
.ok { width: 14px; height: 16px; fill: #4dad55; }
.ok path { fill: none; stroke: #d4f0d4; stroke-width: 1.5; }
.invite { height: 39px; padding-left: 11px; margin-left: 10px; }

.cursor {
  position: absolute;
  left: 113px;
  top: 529px;
  width: 34px;
  height: 36px;
  fill: #fff;
  stroke: #111;
  stroke-width: 1.8;
  filter: drop-shadow(2px 3px 2px rgba(0, 0, 0, 0.35));
}
.scroll-thumb {
  position: absolute;
  right: 0;
  top: 108px;
  width: 7px;
  height: 1603px;
  background: #cfcfcc;
  border-radius: 4px 0 0 4px;
}
</style>
